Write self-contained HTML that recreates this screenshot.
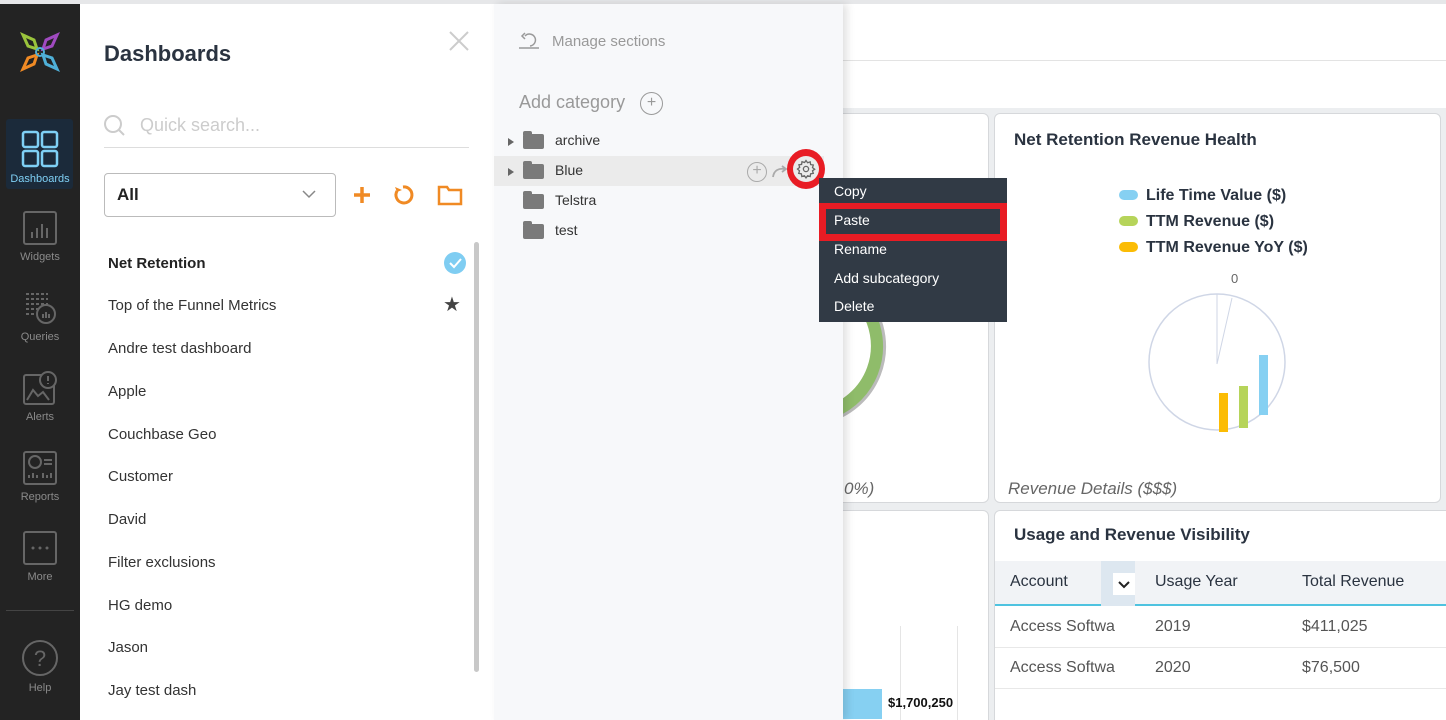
<!DOCTYPE html>
<html><head><meta charset="utf-8"><style>
*{box-sizing:border-box;margin:0;padding:0}
html,body{width:1446px;height:720px;overflow:hidden}
body{position:relative;background:#fff;font-family:"Liberation Sans",sans-serif;}
.abs{position:absolute}
#top{left:0;top:0;width:1446px;height:4px;background:#e6e7e9}
#side{left:0;top:4px;width:80px;height:716px;background:#232323}
.nav{position:absolute;left:0;width:80px;text-align:center;color:#8a8a8a;font-size:11px}
.nav svg{display:block;margin:0 auto 5px}
#dp{left:80px;top:4px;width:414px;height:716px;background:#fff}
.item{position:absolute;left:28px;font-size:15px;color:#333}
#sp{left:494px;top:4px;width:349px;height:716px;background:#f7f8fa;box-shadow:4px 0 8px rgba(0,0,0,.12)}
.row{position:absolute;left:0;width:330px;height:30px;font-size:14px;color:#333}
.row .fold{position:absolute;left:29px;top:8px;width:21px;height:15px;background:#7a7a7a;border-radius:2px}
.row .fold:before{content:"";position:absolute;left:0;top:-3px;width:9px;height:4px;background:#7a7a7a;border-radius:2px 2px 0 0}
.row .tri{position:absolute;left:14px;top:12px;border-left:6px solid #666;border-top:4px solid transparent;border-bottom:4px solid transparent}
.row span{position:absolute;left:61px;top:6px}
#main{left:843px;top:4px;width:603px;height:716px;background:#fff;overflow:hidden}
.card{position:absolute;background:#fff;border:1px solid #d6d8db;border-radius:6px;overflow:hidden}
#menu{left:819px;top:178px;width:188px;height:144px;background:#313a45;color:#fff;font-size:14px}
#menu div{position:absolute;left:15px}
</style></head><body>
<div id="top" class="abs"></div>
<div id="side" class="abs">
 <svg class="abs" style="left:20px;top:28px" width="40" height="40" viewBox="0 0 40 40">
  <path d="M3 3 L14 8 L17 17 L8 14Z" fill="none" stroke="#9ac43c" stroke-width="3"/>
  <path d="M37 3 L26 8 L23 17 L32 14Z" fill="none" stroke="#a04ac0" stroke-width="3"/>
  <path d="M3 37 L14 32 L17 23 L8 26Z" fill="none" stroke="#f08a24" stroke-width="3"/>
  <path d="M37 37 L26 32 L23 23 L32 26Z" fill="none" stroke="#4fb0d8" stroke-width="3"/>
  <circle cx="20" cy="20" r="4" fill="none" stroke="#4fb0d8" stroke-width="2"/>
 </svg>
 <div class="abs" style="left:6px;top:115px;width:67px;height:70px;background:#1b2a3a;border-radius:3px"></div>
 <div class="nav" style="top:126px;color:#7fd0f5"><svg width="38" height="38"><rect x="2" y="2" width="15" height="15" rx="2" fill="none" stroke="#7fd0f5" stroke-width="2.5"/><rect x="21" y="2" width="15" height="15" rx="2" fill="none" stroke="#7fd0f5" stroke-width="2.5"/><rect x="2" y="21" width="15" height="15" rx="2" fill="none" stroke="#7fd0f5" stroke-width="2.5"/><rect x="21" y="21" width="15" height="15" rx="2" fill="none" stroke="#7fd0f5" stroke-width="2.5"/></svg>Dashboards</div>
 <div class="nav" style="top:206px"><svg width="36" height="36"><rect x="2" y="2" width="32" height="32" rx="2" fill="none" stroke="#666" stroke-width="2"/><path d="M10 28v-6M15 28v-10M20 28v-14M25 28v-10" stroke="#666" stroke-width="2"/></svg>Widgets</div>
 <div class="nav" style="top:286px"><svg width="36" height="36"><path d="M4 4h22M4 9h22M4 14h22M4 19h12M4 24h10" stroke="#666" stroke-width="2" stroke-dasharray="3 2"/><circle cx="24" cy="24" r="9" fill="none" stroke="#666" stroke-width="2"/><path d="M21 28v-4M24 28v-6M27 28v-4" stroke="#666" stroke-width="2"/></svg>Queries</div>
 <div class="nav" style="top:366px"><svg width="36" height="36"><rect x="2" y="5" width="30" height="29" rx="2" fill="none" stroke="#666" stroke-width="2"/><circle cx="26" cy="10" r="8" fill="#232323" stroke="#666" stroke-width="2"/><path d="M26 6v5M26 13v1" stroke="#666" stroke-width="2"/><path d="M5 30l6-10 5 6 5-4 6 8" fill="none" stroke="#666" stroke-width="2"/></svg>Alerts</div>
 <div class="nav" style="top:446px"><svg width="36" height="36"><rect x="2" y="2" width="32" height="32" rx="2" fill="none" stroke="#666" stroke-width="2"/><circle cx="13" cy="12" r="6" fill="none" stroke="#666" stroke-width="2"/><path d="M22 10h8M22 14h8M7 28v-3M11 28v-5M15 28v-3M21 28v-5M25 28v-3M29 28v-5" stroke="#666" stroke-width="2"/></svg>Reports</div>
 <div class="nav" style="top:526px"><svg width="36" height="36"><rect x="2" y="2" width="32" height="32" rx="2" fill="none" stroke="#666" stroke-width="2"/><circle cx="11" cy="18" r="1.5" fill="#666"/><circle cx="18" cy="18" r="1.5" fill="#666"/><circle cx="25" cy="18" r="1.5" fill="#666"/></svg>More</div>
 <div class="abs" style="left:6px;top:606px;width:68px;height:1px;background:#444"></div>
 <div class="nav" style="top:635px"><svg width="38" height="38"><circle cx="19" cy="19" r="17" fill="none" stroke="#666" stroke-width="2"/><text x="19" y="27" text-anchor="middle" font-size="22" fill="#666" font-family="Liberation Sans">?</text></svg>Help</div>
</div>
<div id="dp" class="abs">
 <div class="abs" style="left:24px;top:37px;font-size:22px;font-weight:bold;color:#2a3340">Dashboards</div>
 <svg class="abs" style="left:368px;top:26px" width="22" height="22"><path d="M2 2L20 20M20 2L2 20" stroke="#ccc" stroke-width="2"/></svg>
 <svg class="abs" style="left:23px;top:110px" width="24" height="24"><circle cx="10" cy="10" r="8" fill="none" stroke="#ccc" stroke-width="2"/><path d="M16 16l5 5" stroke="#ccc" stroke-width="2"/></svg>
 <div class="abs" style="left:60px;top:111px;font-size:18px;color:#ccc">Quick search...</div>
 <div class="abs" style="left:24px;top:143px;width:365px;height:1px;background:#ddd"></div>
 <div class="abs" style="left:24px;top:169px;width:232px;height:44px;border:1px solid #bbb;border-radius:4px"><span class="abs" style="left:12px;top:11px;font-size:17px;font-weight:bold;color:#222">All</span><svg class="abs" style="left:196px;top:14px" width="16" height="12"><path d="M2 3l6 6 6-6" fill="none" stroke="#888" stroke-width="1.5"/></svg></div>
 <svg class="abs" style="left:273px;top:182px" width="18" height="18"><path d="M9 1v16M1 9h16" stroke="#f08a24" stroke-width="3.5"/></svg>
 <svg class="abs" style="left:312px;top:180px" width="22" height="22"><path d="M5 7 A8 8 0 1 0 11 3" fill="none" stroke="#f08a24" stroke-width="3"/><path d="M3 3l2 5 5-2" fill="#f08a24"/></svg>
 <svg class="abs" style="left:357px;top:180px" width="26" height="22"><path d="M2 3h8l2 3h12v14H2z" fill="none" stroke="#f08a24" stroke-width="2.5"/></svg>
 <div class="abs" style="left:394px;top:238px;width:5px;height:430px;background:#c8c8c8;border-radius:3px"></div>
 <div class="item" style="top:251px;font-weight:bold;color:#222">Net Retention</div>
 <div class="abs" style="left:364px;top:248px;width:22px;height:22px;border-radius:50%;background:#7fcdf2"><svg width="22" height="22"><path d="M6 11l4 4 7-8" fill="none" stroke="#fff" stroke-width="2"/></svg></div>
 <div class="item" style="top:293px">Top of the Funnel Metrics</div>
 <div class="abs" style="left:363px;top:288px;font-size:20px;color:#444">★</div>
 <div class="item" style="top:336px">Andre test dashboard</div>
 <div class="item" style="top:379px">Apple</div>
 <div class="item" style="top:422px">Couchbase Geo</div>
 <div class="item" style="top:464px">Customer</div>
 <div class="item" style="top:507px">David</div>
 <div class="item" style="top:550px">Filter exclusions</div>
 <div class="item" style="top:593px">HG demo</div>
 <div class="item" style="top:635px">Jason</div>
 <div class="item" style="top:678px">Jay test dash</div>
</div>
<div id="main" class="abs">
 <div class="abs" style="left:0;top:56px;width:603px;height:1px;background:#e3e3e3"></div>
 <div class="abs" style="left:0;top:104px;width:603px;height:612px;background:#eceef0"></div>
 <div class="card" style="left:-20px;top:109px;width:166px;height:390px">
  <svg class="abs" style="left:0;top:200px" width="70" height="110"><path d="M0 100 A70 70 0 0 0 40 -10" fill="none" stroke="#8fbc6a" stroke-width="14"/><path d="M2 108 A78 78 0 0 0 48 -10" fill="none" stroke="#bbb" stroke-width="3"/></svg>
  <div class="abs" style="left:20px;top:365px;font-size:17px;font-style:italic;color:#666">0%)</div>
 </div>
 <div class="card" style="left:151px;top:109px;width:447px;height:390px">
  <div class="abs" style="left:19px;top:16px;font-size:17px;font-weight:bold;color:#2a3340">Net Retention Revenue Health</div>
  <div class="abs" style="left:124px;top:69px;font-size:16px;font-weight:bold;color:#2a3340;line-height:26px">
   <div><span style="display:inline-block;width:19px;height:10px;border-radius:5px;background:#86d0f2;margin-right:8px"></span>Life Time Value ($)</div>
   <div><span style="display:inline-block;width:19px;height:10px;border-radius:5px;background:#b6d45a;margin-right:8px"></span>TTM Revenue ($)</div>
   <div><span style="display:inline-block;width:19px;height:10px;border-radius:5px;background:#fbbc05;margin-right:8px"></span>TTM Revenue YoY ($)</div>
  </div>
  <div class="abs" style="left:236px;top:157px;font-size:13px;color:#666">0</div>
  <svg class="abs" style="left:0;top:0" width="447" height="390"><circle cx="222" cy="248" r="68" fill="none" stroke="#cfd6e6" stroke-width="1.5"/><path d="M222 180v70M222 250l15-66" stroke="#cfd6e6"/><rect x="224" y="279" width="9" height="39" fill="#fbbc05"/><rect x="244" y="272" width="9" height="42" fill="#b6d45a"/><rect x="264" y="241" width="9" height="60" fill="#86d0f2"/></svg>
  <div class="abs" style="left:13px;top:365px;font-size:17px;font-style:italic;color:#666">Revenue Details ($$$)</div>
 </div>
 <div class="card" style="left:-20px;top:506px;width:166px;height:230px">
  <div class="abs" style="left:76px;top:115px;width:1px;height:100px;background:#e5e5e5"></div>
  <div class="abs" style="left:133px;top:115px;width:1px;height:100px;background:#e5e5e5"></div>
  <div class="abs" style="left:0;top:178px;width:58px;height:30px;background:#86d0f2"></div>
  <div class="abs" style="left:64px;top:184px;font-size:13px;font-weight:bold;color:#111">$1,700,250</div>
 </div>
 <div class="card" style="left:151px;top:506px;width:460px;height:230px">
  <div class="abs" style="left:19px;top:14px;font-size:17px;font-weight:bold;color:#2a3340">Usage and Revenue Visibility</div>
  <div class="abs" style="left:0;top:50px;width:460px;height:45px;background:#f1f3f6;border-bottom:2px solid #4fc3e0"></div>
  <div class="abs" style="left:106px;top:50px;width:34px;height:45px;background:#dde7f0"><div class="abs" style="left:12px;top:12px;width:22px;height:22px;background:#fff"><svg width="22" height="22"><path d="M6 9l5 5 5-5" fill="none" stroke="#222" stroke-width="2"/></svg></div></div>
  <div class="abs" style="left:15px;top:62px;font-size:16px;color:#2a3340">Account</div>
  <div class="abs" style="left:160px;top:62px;font-size:16px;color:#2a3340">Usage Year</div>
  <div class="abs" style="left:307px;top:62px;font-size:16px;color:#2a3340">Total Revenue</div>
  <div class="abs" style="left:15px;top:107px;font-size:16px;color:#555">Access Softwa</div>
  <div class="abs" style="left:160px;top:107px;font-size:16px;color:#555">2019</div>
  <div class="abs" style="left:307px;top:107px;font-size:16px;color:#555">$411,025</div>
  <div class="abs" style="left:0;top:136px;width:460px;height:1px;background:#e8e8e8"></div>
  <div class="abs" style="left:15px;top:148px;font-size:16px;color:#555">Access Softwa</div>
  <div class="abs" style="left:160px;top:148px;font-size:16px;color:#555">2020</div>
  <div class="abs" style="left:307px;top:148px;font-size:16px;color:#555">$76,500</div>
  <div class="abs" style="left:0;top:177px;width:460px;height:1px;background:#e8e8e8"></div>
 </div>
</div>
<div id="sp" class="abs">
 <svg class="abs" style="left:24px;top:26px" width="24" height="20"><path d="M1 18h20M7 6 A6 6 0 1 1 12 16" fill="none" stroke="#999" stroke-width="1.5"/><path d="M7 3l-3 3 3 3" fill="none" stroke="#999" stroke-width="1.5"/></svg>
 <div class="abs" style="left:58px;top:29px;font-size:15px;color:#999">Manage sections</div>
 <div class="abs" style="left:25px;top:88px;font-size:18px;color:#999">Add category</div>
 <div class="abs" style="left:146px;top:88px;width:23px;height:23px;border:1px solid #999;border-radius:50%;color:#999;text-align:center;line-height:20px;font-size:16px">+</div>
 <div class="row" style="top:122px"><i class="tri"></i><i class="fold"></i><span>archive</span></div>
 <div class="row" style="top:152px;background:#ebebeb"><i class="tri"></i><i class="fold"></i><span>Blue</span>
  <div class="abs" style="left:253px;top:6px;width:20px;height:20px;border:1.5px solid #aaa;border-radius:50%;color:#aaa;text-align:center;line-height:16px;font-size:16px">+</div>
  <svg class="abs" style="left:278px;top:8px" width="16" height="14"><path d="M1 13 C2 6 7 4 13 5M10 2l4 3-4 3" fill="none" stroke="#aaa" stroke-width="1.8"/></svg>
 </div>
 <div class="abs" style="left:293px;top:145px;width:38px;height:40px;border-radius:50%;background:#e81c24"></div>
 <div class="abs" style="left:299px;top:152px;width:26px;height:26px;border-radius:50%;background:#ebebeb"></div>
 <svg class="abs" style="left:302px;top:155px" width="20" height="20" viewBox="0 0 20 20"><path d="M10 1.5l1.6 2.2 2.6-.8.4 2.7 2.7.4-.8 2.6 2.2 1.6-2.2 1.6.8 2.6-2.7.4-.4 2.7-2.6-.8-1.6 2.2-1.6-2.2-2.6.8-.4-2.7-2.7-.4.8-2.6L1.5 10l2.2-1.6-.8-2.6 2.7-.4.4-2.7 2.6.8z" fill="none" stroke="#666" stroke-width="1.3"/><circle cx="10" cy="10" r="2.6" fill="none" stroke="#666" stroke-width="1.3"/></svg>
 <div class="row" style="top:182px"><i class="fold"></i><span>Telstra</span></div>
 <div class="row" style="top:212px"><i class="fold"></i><span>test</span></div>
</div>
<div id="menu" class="abs">
 <div style="top:5px">Copy</div>
 <div class="abs" style="left:0!important;top:25px;width:188px;height:38px;background:#e81c24"></div>
 <div class="abs" style="left:7px!important;top:31px;width:174px;height:25px;background:#313a45"></div>
 <div style="top:34px">Paste</div>
 <div style="top:63px">Rename</div>
 <div style="top:92px">Add subcategory</div>
 <div style="top:120px">Delete</div>
</div>
</body></html>
